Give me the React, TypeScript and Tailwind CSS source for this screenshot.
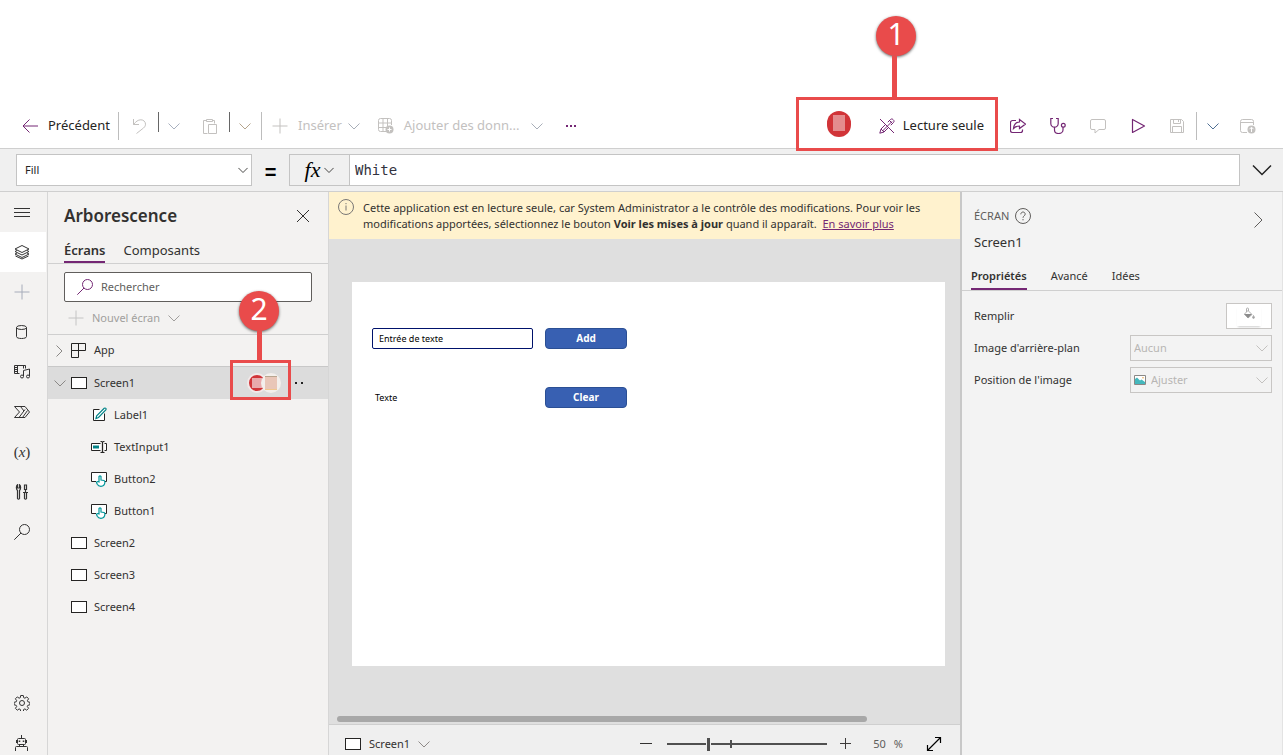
import React from "react";

type IconProps = { className?: string };

function Icon({
  children,
  className = "",
  size = 16,
}: IconProps & { children: React.ReactNode; size?: number }) {
  return (
    <svg
      width={size}
      height={size}
      viewBox={`0 0 ${size} ${size}`}
      fill="none"
      stroke="currentColor"
      strokeWidth="1"
      className={`shrink-0 ${className}`}
      aria-hidden="true"
    >
      {children}
    </svg>
  );
}

function ChevronDown({ className = "", size = 12 }: IconProps & { size?: number }) {
  return (
    <svg width={size} height={size} viewBox="0 0 12 12" fill="none" stroke="currentColor" className={`shrink-0 ${className}`} aria-hidden="true">
      <path d="M0.5 3.5 6 9l5.500-5.500" />
    </svg>
  );
}

const BackIcon = () => (
  <Icon>
    <path d="M7.500 1.500 1 8l6.500 6.500M1 8h15" />
  </Icon>
);
const UndoIcon = () => (
  <Icon>
    <path d="M2.500 1v5.500H8M2.500 6.500C5 3.500 7 1.800 9.800 1.800c2.700 0 4.700 1.900 4.700 4.400 0 1.500-.7 2.700-2 3.800L5.500 15.500" />
  </Icon>
);
const PasteIcon = () => (
  <Icon>
    <path d="M5.500 15.500h-4v-13h3M12.500 5.500v-3h-2M4.500 1.500h6v2h-6zM6.500 6.500h8v9h-8z" />
  </Icon>
);
const PlusIcon = ({ className = "" }: IconProps) => (
  <Icon className={className}>
    <path d="M8 .5v15M.5 8h15" />
  </Icon>
);
const DataIcon = () => (
  <Icon>
    <path d="M8 13.500H2.500a2 2 0 0 1-2-2v-9a2 2 0 0 1 2-2h9a2 2 0 0 1 2 2V7M5 .5v13M9.500.5V8M.5 5h13M.5 9.500h8" />
    <circle cx="11.500" cy="11.500" r="4" fill="currentColor" stroke="none" />
    <path d="M11.500 9.500v4M9.500 11.500h4" stroke="white" />
  </Icon>
);
const ReadOnlyIcon = () => (
  <Icon className="text-[#742774]">
    <path d="M1 1l14 14M8.800 4.200l2.700-2.700c.7-.7 1.800-.7 2.500 0l.5.500c.7.700.7 1.800 0 2.500l-2.700 2.700M6.500 6.500l-4.500 4.500-1.200 4.200L5 14l4.500-4.500M11 3l2.500 2.500M2 11l3 3M13 3.500 3.500 13" />
  </Icon>
);
const ShareIcon = () => (
  <Icon>
    <path d="M6 2.500H2.500a2 2 0 0 0-2 2v8a2 2 0 0 0 2 2h8a2 2 0 0 0 2-2v-1M9.500 1.500l6 4.500-6 4.500V8C7 8 5 8.800 3.500 10.500 4 6.500 6 4.200 9.500 4z" strokeWidth="1.200" />
  </Icon>
);
const CheckerIcon = () => (
  <Icon>
    <path d="M3 .5H.8v5a3.700 3.700 0 0 0 7.400 0v-5H6M4.500 9.200V12c0 2 1.700 3.500 4 3.500s4.500-1.500 4.500-3.500V9" strokeWidth="1.200" />
    <circle cx="13.300" cy="7.200" r="1.900" strokeWidth="1.200" />
  </Icon>
);
const CommentIcon = () => (
  <Icon>
    <path d="M2 1.500h12a1.500 1.500 0 0 1 1.500 1.500v7a1.500 1.500 0 0 1-1.500 1.500H9L5 15v-3.500H2A1.500 1.500 0 0 1 .5 10V3A1.500 1.500 0 0 1 2 1.500z" />
  </Icon>
);
const PlayIcon = () => (
  <Icon>
    <path d="M2.500 1.500v13L14.500 8z" strokeLinejoin="round" strokeWidth="1.200" />
  </Icon>
);
const SaveIcon = () => (
  <Icon>
    <path d="M1.500 1.500h11l2 2v11h-13zM4.500 1.500v4h7v-4M3.500 14.500v-6h9v6M9.500 2v2" />
  </Icon>
);
const PublishIcon = () => (
  <Icon>
    <path d="M7 14.500H2.500a2 2 0 0 1-2-2v-9a2 2 0 0 1 2-2h9a2 2 0 0 1 2 2V7M.5 4.500h13" />
    <circle cx="11.500" cy="11.500" r="4" fill="currentColor" stroke="none" />
    <path d="M11.500 14V9.500M9.500 11.200l2-2 2 2" stroke="white" />
  </Icon>
);
const MenuIcon = () => (
  <Icon>
    <path d="M0 4.500h16M0 8.500h16M0 12.500h16" />
  </Icon>
);
const LayersIcon = () => (
  <Icon>
    <path d="M8 1.500 15 5 8 8.500 1 5zM3 6.500l-2 1L8 11l7-3.500-2-1M3 9 1 10l7 3.500 7-3.500-2-1M1.500 12 8 15l6.500-3" />
  </Icon>
);
const DatabaseIcon = () => (
  <Icon>
    <path d="M2.500 3.500v9c0 1.300 2.200 2 5 2s5-.7 5-2v-9" />
    <ellipse cx="7.500" cy="3.500" rx="5" ry="2" />
  </Icon>
);
const MediaIcon = () => (
  <Icon>
    <path d="M5.500 9.500H.5v-8h11v3M3.500 1.500v8M.5 3.500h3M.5 5.500h3M.5 7.500h3M9.500 1.500v3M9.500 12V6.500l6-1.500v7" />
    <circle cx="8" cy="12.500" r="1.500" />
    <circle cx="14" cy="12.500" r="1.500" />
  </Icon>
);
const FlowIcon = () => (
  <Icon>
    <path d="M.5 2.500H11L15.500 8 11 13.500H.5L5.500 8zM5 13.500l6-8M8.500 13.500l5-7M6.500 2.500 10 7" strokeLinejoin="round" />
  </Icon>
);
const ToolsIcon = () => (
  <Icon>
    <path d="M3.500 6.500v8q1 1.500 2 0v-8C7 5 7 2 5.500.8V4h-2V.8C2 2 2 5 3.500 6.500zM10.500 1h2v4.500h-2zM11.500 5.500V8M9 8.500h5M10.500 8.500v6q1 1.500 2 0v-6" strokeWidth="1.200" />
  </Icon>
);
const SearchIcon = ({ className = "" }: IconProps) => (
  <Icon className={className}>
    <circle cx="10.500" cy="5.500" r="5" />
    <path d="M7 9 .3 15.700" />
  </Icon>
);
const GearIcon = () => (
  <Icon>
    <circle cx="8" cy="8" r="2.500" />
    <path d="M6.700.5h2.600l.4 2.200 1.200.5 1.900-1.300 1.800 1.900-1.200 1.900.5 1.100 2 .5v2.500l-2.100.5-.5 1.200 1.300 1.800-1.900 1.900-1.800-1.300-1.200.5-.4 2.100H6.700l-.4-2.100-1.200-.5-1.800 1.300-1.900-1.900 1.300-1.800-.5-1.200L.1 9.800V7.300l2.100-.5.500-1.100-1.300-1.900 1.900-1.900 1.800 1.300 1.200-.5z" strokeLinejoin="round" />
  </Icon>
);
const RobotIcon = () => (
  <Icon>
    <path d="M7.500 0v3M4.500 3.500h6a1 1 0 0 1 1 1v4a1 1 0 0 1-1 1h-6a1 1 0 0 1-1-1v-4a1 1 0 0 1 1-1zM2.500 5v3M12.500 5v3M5.500 9.500v2h4v-2M1.500 16v-3.500a1 1 0 0 1 1-1h10a1 1 0 0 1 1 1V16" />
    <path d="M5.500 5.500v1.500M9.500 5.500v1.500" strokeWidth="1.500" />
  </Icon>
);
const ScreenIcon = () => (
  <Icon className="text-[#252423]">
    <rect x="0.500" y="2.500" width="15" height="11" fill="white" />
  </Icon>
);
const AppIcon = () => (
  <Icon className="text-[#252423]">
    <path d="M.5.5h14v7H.5zM.5 7.500h7v7h-7zM7.500.5v7" />
  </Icon>
);
const LabelIcon = () => (
  <Icon className="text-[#252423]">
    <path d="M8.500 2.500h-6v11h11v-7" fill="white" />
    <path d="M5 11.500l.7-2.700 7.500-7.500q1-.6 1.600 0t0 1.600L7.500 10.500z" fill="white" stroke="#038387" strokeWidth="1.200" />
  </Icon>
);
const TextInputIcon = () => (
  <Icon className="text-[#252423]">
    <path d="M9.500 4.500h-9v7h9M13.500 4.500h2v7h-2" fill="white" />
    <path d="M2 8h6" stroke="#038387" strokeWidth="3" />
    <path d="M9.500 2.500h1q1 0 1 1v9q0 1-1 1h-1M13.500 2.500h-1q-1 0-1 1M13.500 13.500h-1q-1 0-1-1" strokeWidth="1.200" />
  </Icon>
);
const ButtonIcon = () => (
  <Icon className="text-[#252423]">
    <path d="M5 10.500H.5v-9h15v9H14" fill="white" />
    <path d="M8 11V5.500q1-1.200 2 0V9l3 .5q1 .5.900 1.800-.3 4-4 4-2.600 0-3.600-2L5.500 11.500q0-1 1-1z" fill="white" stroke="#00979b" strokeWidth="1.200" />
  </Icon>
);

function Callout({ label }: { label: string }) {
  return (
    <span className="flex size-10 shrink-0 items-center justify-center rounded-full bg-[#e94b4b] pb-1 text-[30px] leading-none text-white shadow-[0_1px_3px_rgba(0,0,0,0.6)]">
      {label}
    </span>
  );
}

function ToolButton({ label, children, className = "", disabled = false }: IconProps & { label: string; children: React.ReactNode; disabled?: boolean }) {
  return (
    <button type="button" aria-label={label} disabled={disabled} className={`flex h-7 items-center justify-center ${className}`}>
      {children}
    </button>
  );
}

function Toolbar() {
  return (
    <header className="flex h-[149px] items-center border-b border-[#cfcfcf] bg-white pt-[104px] text-[13px]">
      <div className="flex items-center text-[#c3c1bf]">
        <button type="button" className="flex w-[118px] items-center gap-[10px] pl-[22px] text-[#252423]">
          <span className="text-[#742774]"><BackIcon /></span>
          Précédent
        </button>
        <span className="h-7 w-px bg-[#bdbdbd]" />
        <ToolButton label="Annuler" disabled className="w-[39px]"><UndoIcon /></ToolButton>
        <span className="mb-2 h-5 w-px bg-[#666]" />
        <ToolButton label="Options d'annulation" disabled className="w-[31px] pr-[2px]"><ChevronDown className="text-[#a8b0bf]" /></ToolButton>
        <ToolButton label="Coller" disabled className="w-[39px]"><PasteIcon /></ToolButton>
        <span className="mb-2 h-5 w-px bg-[#666]" />
        <ToolButton label="Options de collage" disabled className="w-[31px] pr-[2px]"><ChevronDown className="text-[#b5a48c]" /></ToolButton>
        <span className="h-7 w-px bg-[#bdbdbd]" />
        <button type="button" disabled className="flex items-center gap-[10px] pl-[10px]">
          <PlusIcon />
          Insérer
          <ChevronDown className="-ml-1 text-[#a8aeb8]" />
        </button>
        <button type="button" disabled className="ml-[18px] flex items-center gap-[10px]">
          <DataIcon />
          Ajouter des donn...
          <ChevronDown className="ml-[2px] text-[#a8aeb8]" />
        </button>
        <ToolButton label="Plus de commandes" className="ml-2 w-10">
          <span className="flex gap-[2px]">
            <span className="size-[2px] bg-[#742774]" />
            <span className="size-[2px] bg-[#742774]" />
            <span className="size-[2px] bg-[#742774]" />
          </span>
        </ToolButton>
      </div>

      <div className="ml-auto flex items-center pr-[15px] text-[#742774]">
        <div className="relative flex items-center pr-[14px]">
          <div className="mr-7 mb-[4px] flex h-[26px] w-6 items-center justify-center rounded-full bg-[#d13438] pb-[2px]">
            <span className="h-4 w-3 bg-[#e48c8e]" />
          </div>
          <button type="button" className="flex items-center gap-2 text-[#252423]">
            <ReadOnlyIcon />
            Lecture seule
          </button>
          <div className="pointer-events-none absolute right-0 bottom-[-10px] h-[54px] w-[202px] border-[3px] border-[#e94b4b]">
            <div className="absolute bottom-full left-[77px] flex w-10 flex-col items-center">
              <Callout label="1" />
              <span className="mr-1 h-[44px] w-[5px] bg-[#e94b4b]" />
            </div>
          </div>
        </div>
        <ToolButton label="Partager" className="w-10"><ShareIcon /></ToolButton>
        <ToolButton label="Vérificateur d'application" className="w-10"><CheckerIcon /></ToolButton>
        <ToolButton label="Commentaires" disabled className="w-10 text-[#c3c1bf]"><CommentIcon /></ToolButton>
        <ToolButton label="Aperçu" className="w-10"><PlayIcon /></ToolButton>
        <ToolButton label="Enregistrer" disabled className="w-[38px] text-[#c3c1bf]"><SaveIcon /></ToolButton>
        <span className="h-7 w-px bg-[#bdbdbd]" />
        <ToolButton label="Options d'enregistrement" className="w-[31px] text-[#4f6f93]"><ChevronDown /></ToolButton>
        <ToolButton label="Publier" disabled className="w-10 text-[#c3c1bf]"><PublishIcon /></ToolButton>
      </div>
    </header>
  );
}

function FormulaBar() {
  return (
    <div className="flex h-[43px] shrink-0 items-center border-b border-[#cfcfcf] bg-[#f0f0f0] pl-4 text-[#252423]">
      <div className="relative">
        <select aria-label="Propriété" className="block h-8 w-[236px] appearance-none border border-[#c4c4c4] bg-white px-2 text-[11px]">
          <option>Fill</option>
        </select>
        <ChevronDown size={10} className="pointer-events-none absolute top-[11px] right-1" />
      </div>
      <span className="w-[37px] pt-1 text-center font-['Liberation_Sans',sans-serif] text-xl leading-8 font-bold text-black">=</span>
      <button type="button" aria-label="Fonctions" className="flex h-8 w-[61px] items-center justify-center gap-1 border border-[#c4c4c4]">
        <span className="font-['Liberation_Serif',serif] text-[22px] leading-6 text-black italic">fx</span>
        <ChevronDown size={10} />
      </button>
      <input
        aria-label="Formule"
        defaultValue="White"
        className="h-8 min-w-0 flex-1 border border-l-0 border-[#c4c4c4] bg-white px-[5px] font-['DejaVu_Sans_Mono',monospace] text-sm text-[#333340]"
      />
      <button type="button" aria-label="Développer la barre de formule" className="flex h-8 w-[43px] items-center justify-center">
        <svg width="20" height="12" viewBox="0 0 20 12" fill="none" stroke="#222" strokeWidth="1.500" aria-hidden="true">
          <path d="M1 1.500l9 9 9-9" />
        </svg>
      </button>
    </div>
  );
}

const railItems = [
  { label: "Menu", icon: <MenuIcon /> },
  { label: "Arborescence", icon: <LayersIcon />, active: true },
  { label: "Insérer", icon: <PlusIcon className="text-[#a6acba]" /> },
  { label: "Données", icon: <DatabaseIcon /> },
  { label: "Média", icon: <MediaIcon /> },
  { label: "Power Automate", icon: <FlowIcon /> },
  {
    label: "Variables",
    icon: (
      <span className="font-['Liberation_Serif',serif] text-[15px] leading-4">
        (<i>x</i>)
      </span>
    ),
  },
  { label: "Outils avancés", icon: <ToolsIcon /> },
  { label: "Rechercher", icon: <SearchIcon /> },
];

function Rail() {
  return (
    <nav className="flex w-12 shrink-0 flex-col border-r border-[#d6d6d6] bg-[#f3f2f1] text-[#333]">
      {railItems.map((item) => (
        <button
          key={item.label}
          type="button"
          aria-label={item.label}
          className={`flex h-10 w-[46px] items-center justify-center pr-[2px] ${item.active ? "bg-white" : ""}`}
        >
          {item.icon}
        </button>
      ))}
      <button type="button" aria-label="Paramètres" className="mt-auto flex h-10 w-[46px] items-center justify-center pr-[2px]"><GearIcon /></button>
      <button type="button" aria-label="Agent virtuel" className="flex h-10 w-[46px] items-center justify-center pr-[2px]"><RobotIcon /></button>
    </nav>
  );
}

function Presence() {
  return (
    <span className="relative ml-auto flex items-center">
      <span className="flex size-5 items-center justify-center rounded-full border-2 border-[#f1e9e9] bg-[#d13438]">
        <span className="size-[10px] bg-[#e8a9ab]" />
      </span>
      <span className="-ml-[6px] flex size-5 items-center justify-center rounded-full bg-[#f3efec]">
        <span className="h-[14px] w-3 border-t border-b border-t-[#b8a58f] border-b-[#f0c78e] bg-[#e9c6b8]" />
      </span>
      <span className="pointer-events-none absolute -top-[13px] -left-[17px] h-10 w-[61px] border-[3px] border-[#e94b4b]">
        <span className="absolute bottom-full left-[6px] flex w-10 flex-col items-center">
          <Callout label="2" />
          <span className="h-8 w-[5px] bg-[#e94b4b]" />
        </span>
      </span>
    </span>
  );
}

const controls = [
  { name: "Label1", icon: <LabelIcon /> },
  { name: "TextInput1", icon: <TextInputIcon /> },
  { name: "Button2", icon: <ButtonIcon /> },
  { name: "Button1", icon: <ButtonIcon /> },
];

function TreePanel() {
  return (
    <aside className="flex w-[281px] shrink-0 flex-col border-r border-[#d6d6d6] bg-[#f3f2f1] text-[#323130]">
      <div className="flex h-12 items-center justify-between pr-[17px] pl-4">
        <h2 className="text-[17px] font-semibold">Arborescence</h2>
        <button type="button" aria-label="Fermer">
          <Icon><path d="M2 2l12 12M14 2 2 14" /></Icon>
        </button>
      </div>
      <div className="flex h-6 gap-[18px] border-b border-[#d0d0d0] pl-4 text-[13px]">
        <button type="button" className="flex border-b-2 border-[#742774] font-semibold leading-[20px]">Écrans</button>
        <button type="button" className="flex leading-[20px]">Composants</button>
      </div>
      <div className="mx-4 mt-2 flex h-[30px] items-center gap-2 rounded-[2px] border border-[#605e5c] bg-white pl-3">
        <SearchIcon className="text-[#742774]" />
        <input aria-label="Rechercher" placeholder="Rechercher" className="min-w-0 flex-1 bg-transparent text-[11px] outline-none placeholder:text-[#605e5c]" />
      </div>
      <button type="button" disabled className="flex h-[33px] items-center gap-2 border-b border-[#cfcfcf] pl-5 text-[11px] text-[#a19f9d]">
        <PlusIcon className="text-[#c4c4c4]" />
        Nouvel écran
        <ChevronDown />
      </button>
      <ul className="text-[11px]">
        <li className="flex h-[31px] items-center pl-[5px]">
          <ChevronDown className="mr-[6px] -rotate-90 text-[#8a8886]" />
          <AppIcon />
          <span className="ml-[7px]">App</span>
        </li>
        <li className="flex h-[33px] items-center border-t border-[#c8c8c8] bg-[#dcdcdc] pl-[6px]">
          <ChevronDown className="mr-[5px] text-[#8a8886]" />
          <ScreenIcon />
          <span className="ml-[7px]">Screen1</span>
          <Presence />
          <button type="button" aria-label="Plus d'actions sur Screen1" className="mr-[25px] ml-[14px] flex gap-1">
            <span className="size-[2px] bg-[#222]" />
            <span className="size-[2px] bg-[#222]" />
          </button>
        </li>
        {controls.map((control) => (
          <li key={control.name} className="flex h-8 items-center gap-[7px] pl-[43px]">
            {control.icon}
            {control.name}
          </li>
        ))}
        {["Screen2", "Screen3", "Screen4"].map((name) => (
          <li key={name} className="flex h-8 items-center gap-[7px] pl-[23px]">
            <ScreenIcon />
            {name}
          </li>
        ))}
      </ul>
    </aside>
  );
}

function Banner() {
  return (
    <div className="flex h-[47px] gap-[9px] bg-[#fff2ce] py-2 pr-4 pl-[9px] text-[11px] leading-4 text-[#323130]">
      <Icon className="-mt-px text-[#797775]">
        <circle cx="8" cy="8" r="7.500" />
        <path d="M8 6.500v5M8 4v1.200" />
      </Icon>
      <p>
        Cette application est en lecture seule, car System Administrator a le contrôle des modifications. Pour voir les modifications apportées, sélectionnez le bouton <b>Voir les mises à jour</b> quand il apparaît.&nbsp;{" "}
        <a href="#savoir-plus" className="text-[#742774] underline">En savoir plus</a>
      </p>
    </div>
  );
}

function Stage() {
  return (
    <main className="flex min-w-0 flex-1 flex-col bg-[#dfdfdf]">
      <Banner />
      <div className="flex flex-1 flex-col pt-[43px]">
        <div className="mr-[15px] ml-[23px] aspect-[593/384] bg-white pt-[46px] pl-5">
          <div className="grid grid-cols-[161px_82px] gap-x-3 gap-y-[38px] text-[10px] text-black">
            <input aria-label="Entrée de texte" defaultValue="Entrée de texte" className="h-[21px] w-full min-w-0 rounded-[2px] border border-[#00126b] bg-white px-[6px] text-[9px]" />
            <button type="button" className="h-[21px] rounded-[4px] border border-[#2b4f94] bg-[#3860b2] font-bold text-white">Add</button>
            <span className="pl-[3px] text-[9px] leading-[21px]">Texte</span>
            <button type="button" className="h-[21px] rounded-[4px] border border-[#2b4f94] bg-[#3860b2] font-bold text-white">Clear</button>
          </div>
        </div>
        <div className="mt-auto mb-[2px] ml-2 h-[6px] w-[84%] rounded-full bg-[#a8a8a8]" />
      </div>
      <footer className="flex h-[39px] items-center border-t border-[#cfcfcf] bg-[#efefef] pl-4 text-[11px] text-[#323130]">
        <button type="button" className="flex items-center gap-2">
          <ScreenIcon />
          Screen1
          <ChevronDown className="text-[#8f8a88]" />
        </button>
        <div className="ml-auto flex items-center">
          <button type="button" aria-label="Zoom arrière"><Icon><path d="M2 7.500h12" /></Icon></button>
          <div className="relative mx-[13px] flex items-center">
            <input
              type="range"
              aria-label="Zoom"
              min="0"
              max="100"
              defaultValue="25"
              className="h-4 w-[160px] appearance-none bg-[linear-gradient(#505050,#505050)] bg-[length:100%_2px] bg-center bg-no-repeat [&::-webkit-slider-thumb]:h-[13px] [&::-webkit-slider-thumb]:w-[3px] [&::-webkit-slider-thumb]:appearance-none [&::-webkit-slider-thumb]:bg-[#505050] [&::-webkit-slider-thumb]:shadow-[0_0_0_1px_#efefef]"
            />
            <span className="pointer-events-none absolute left-[63px] h-2 w-[2px] bg-[#505050]" />
          </div>
          <button type="button" aria-label="Zoom avant"><Icon className="text-[#3d3b3a]"><path d="M5.500 2v11M0 7.500h11" /></Icon></button>
          <span className="ml-[17px] text-[#605e5c]">50</span>
          <span className="ml-2 text-[#605e5c]">%</span>
          <button type="button" aria-label="Ajuster à la fenêtre" className="mr-[18px] ml-[23px] text-black">
            <Icon><path d="M2 14 14 2M9 1.500h5.500V7M1.500 9v5.500H7" strokeWidth="1.200" /></Icon>
          </button>
        </div>
      </footer>
    </main>
  );
}

function PropertySelect({ id, value, icon }: { id: string; value: string; icon?: React.ReactNode }) {
  return (
    <div className="relative flex items-center">
      {icon && <span className="pointer-events-none absolute left-1">{icon}</span>}
      <select id={id} disabled className={`h-[26px] w-[142px] appearance-none border border-[#c8c6c4] bg-[#f3f3f3] text-[11px] text-[#b8b6b4] opacity-100 ${icon ? "pl-5" : "pl-[3px]"}`}>
        <option>{value}</option>
      </select>
      <ChevronDown className="pointer-events-none absolute right-1 text-[#c3c1bf]" />
    </div>
  );
}

function PropertiesPanel() {
  return (
    <aside className="w-[323px] shrink-0 border-r border-l-2 border-r-[#e3e3e3] border-l-[#c8c8c8] bg-[#f3f3f3] text-[11px] text-[#323130]">
      <div className="flex h-[68px] items-start justify-between pt-4 pr-4 pl-3">
        <div>
          <div className="flex h-4 items-center gap-[6px] text-[#605e5c]">
            ÉCRAN
            <Icon>
              <circle cx="8" cy="8" r="7.500" />
              <path d="M5.800 6.300c0-1.300 1-2.300 2.200-2.300s2.200.9 2.200 2.100C10.200 7.800 8 7.900 8 9.800M8 11v1.300" />
            </Icon>
          </div>
          <p className="mt-2 text-[13px] leading-5">Screen1</p>
        </div>
        <button type="button" aria-label="Réduire le volet" className="mt-1 text-[#605e5c]">
          <Icon><path d="M4.500.5 12 8l-7.500 7.500" /></Icon>
        </button>
      </div>
      <div className="flex h-[31px] gap-6 border-b border-[#cfcfcf] pl-[9px] leading-8">
        <button type="button" className="flex border-b-2 border-[#742774] font-semibold">Propriétés</button>
        <button type="button" className="flex">Avancé</button>
        <button type="button" className="flex">Idées</button>
      </div>
      <div className="flex flex-col gap-[6px] py-3 pr-[10px] pl-3">
        <div className="flex items-center justify-between">
          <span>Remplir</span>
          <button type="button" disabled aria-label="Couleur de remplissage" className="flex h-[26px] w-[46px] items-center justify-center border border-[#c8c6c4] bg-white">
            <span className="flex h-5 w-6 justify-center shadow-[0_2px_2px_-1px_rgba(0,0,0,0.2)]">
              <svg width="14" height="14" viewBox="0 0 14 14" fill="none" stroke="#b0b0b0" className="mt-px" aria-hidden="true">
                <path d="M2.500 7 6 3.500 10 7.500 6 11zM4.500 5V2q0-1 1-1t1 1v2" />
                <path d="M2 7h8l-4 4z" fill="#8c8c8c" stroke="none" />
                <path d="M11.500 8.500q2 3 0 3t0-3z" fill="#a0a0a0" />
              </svg>
            </span>
          </button>
        </div>
        <div className="flex items-center justify-between">
          <label htmlFor="background-image">Image d'arrière-plan</label>
          <PropertySelect id="background-image" value="Aucun" />
        </div>
        <div className="flex items-center justify-between">
          <label htmlFor="image-position">Position de l'image</label>
          <PropertySelect
            id="image-position"
            value="Ajuster"
            icon={
              <svg width="12" height="10" viewBox="0 0 12 10" aria-hidden="true">
                <path d="M.5.5h11v9H.5z" fill="white" stroke="#8a8886" />
                <path d="M1 9V4l2-1.500 3 3L7.500 4.500 11 7v2z" fill="#45b8bd" />
                <circle cx="9" cy="2.800" r=".8" fill="#e9a94f" />
              </svg>
            }
          />
        </div>
      </div>
    </aside>
  );
}

export default function App() {
  return (
    <div className="h-screen overflow-hidden bg-white font-['Noto_Sans','Open_Sans',sans-serif]">
      <div className="flex h-[calc(100vh+8px)] flex-col">
        <Toolbar />
        <FormulaBar />
        <div className="flex min-h-0 flex-1">
          <Rail />
          <TreePanel />
          <Stage />
          <PropertiesPanel />
        </div>
      </div>
    </div>
  );
}
